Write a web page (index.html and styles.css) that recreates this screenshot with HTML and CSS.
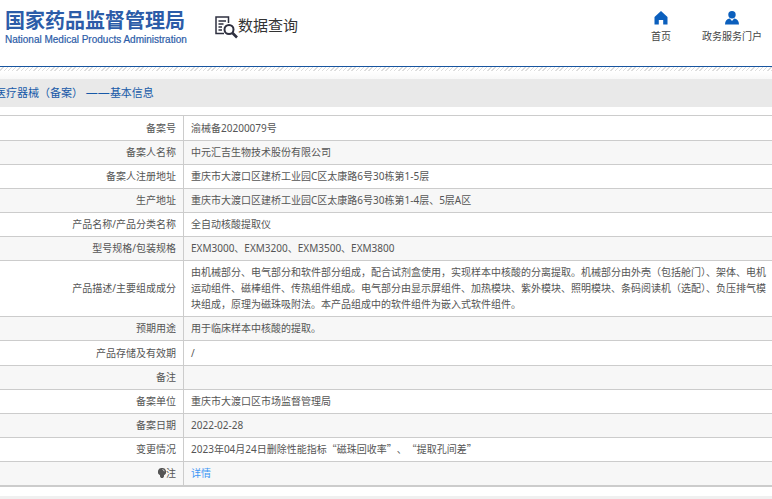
FILE: index.html
```html
<!DOCTYPE html>
<html lang="zh-CN">
<head>
<meta charset="utf-8">
<title>国家药品监督管理局 数据查询</title>
<link rel="stylesheet" href="styles.css">
</head>
<body>
<header class="header">
  <div class="brand">
    <div class="brand-cn">国家药品监督管理局</div>
    <div class="brand-en">National Medical Products Administration</div>
  </div>
  <div class="query">
    <svg class="query-icon" width="23" height="23" viewBox="0 0 23 23" fill="none" stroke="#2f3040">
      <path d="M13.500 7V1H1v16.500h8" stroke-width="1.500"/>
      <path d="M3.500 5h7.500M3.500 8h5M3.500 11h3.500M3.500 14h3.500" stroke-width="1.300"/>
      <circle cx="14" cy="13.500" r="4.500" stroke-width="2"/>
      <path d="M17.500 17l4.500 4.500" stroke-width="2.600"/>
    </svg>
    <span>数据查询</span>
  </div>
  <nav class="nav">
    <a href="#home">
      <svg width="14" height="14" viewBox="0 0 14 14" fill="#0b5fbd"><path d="M7 0l6.500 6v7.500H9.200V9H4.800v4.500H.5V6z"/></svg>
      <span>首页</span>
    </a>
    <a href="#portal">
      <svg width="14" height="14" viewBox="0 0 14 14" fill="#0b5fbd"><circle cx="7" cy="3.700" r="3.700"/><path d="M0 13.500C0 10 2 8 4.800 7.600L7 10l2.200-2.400C12 8 14 10 14 13.500z"/></svg>
      <span>政务服务门户</span>
    </a>
  </nav>
</header>
<div class="hatch"></div>
<main>
  <h1 class="title">医疗器械（备案） <span class="dash">——</span>基本信息</h1>
  <table class="info">
    <tbody>
      <tr><th scope="row">备案号</th><td>渝械备20200079号</td></tr>
      <tr><th scope="row">备案人名称</th><td>中元汇吉生物技术股份有限公司</td></tr>
      <tr><th scope="row">备案人注册地址</th><td>重庆市大渡口区建桥工业园C区太康路6号30栋第1-5层</td></tr>
      <tr><th scope="row">生产地址</th><td>重庆市大渡口区建桥工业园C区太康路6号30栋第1-4层、5层A区</td></tr>
      <tr><th scope="row">产品名称/产品分类名称</th><td>全自动核酸提取仪</td></tr>
      <tr><th scope="row">型号规格/包装规格</th><td>EXM3000、EXM3200、EXM3500、EXM3800</td></tr>
      <tr><th scope="row">产品描述/主要组成成分</th><td>由机械部分、电气部分和软件部分组成，配合试剂盒使用，实现样本中核酸的分离提取。机械部分由外壳（包括舱门）、架体、电机运动组件、磁棒组件、传热组件组成。电气部分由显示屏组件、加热模块、紫外模块、照明模块、条码阅读机（选配）、负压排气模块组成，原理为磁珠吸附法。本产品组成中的软件组件为嵌入式软件组件。</td></tr>
      <tr><th scope="row">预期用途</th><td>用于临床样本中核酸的提取。</td></tr>
      <tr><th scope="row">产品存储及有效期</th><td>/</td></tr>
      <tr><th scope="row">备注</th><td></td></tr>
      <tr><th scope="row">备案单位</th><td>重庆市大渡口区市场监督管理局</td></tr>
      <tr><th scope="row">备案日期</th><td>2022-02-28</td></tr>
      <tr><th scope="row">变更情况</th><td>2023年04月24日删除性能指标<span class="quoted">“磁珠回收率”、“提取孔间差”</span></td></tr>
      <tr><th scope="row"><svg class="bulb" width="8" height="10" viewBox="0 0 8 10"><path d="M4 0a3.800 3.800 0 0 1 2 7.200V8.500L5 10H3L2 8.500V7.200A3.800 3.800 0 0 1 4 0z" fill="#555"/><path d="M4.500 1.500q1.500.3 1.700 1.800" fill="none" stroke="#ddd"/></svg>注</th><td><a href="#detail">详情</a></td></tr>
    </tbody>
  </table>
</main>
<footer class="footer"></footer>
</body>
</html>
```
FILE: styles.css
```css
* { box-sizing: border-box; }

body {
  margin: 0;
  background: #fff;
  color: #555;
  font: 10px/16px "Noto Sans", "Noto Sans CJK SC", sans-serif;
  overflow-x: hidden;
}

a { text-decoration: none; }

.header {
  display: flex;
  align-items: flex-start;
  height: 67px;
  padding: 8px 10px 0 5px;
  border-bottom: 1px solid #17559f;
}

.brand {
  width: 210px;
  color: #2c5ca8;
  white-space: nowrap;
}

.brand-cn {
  font-size: 20px;
  line-height: 25px;
  font-weight: 700;
}

.brand-en {
  font: 10px/14px "Liberation Sans", sans-serif;
  -webkit-text-stroke: 0.2px #2c5ca8;
}

.query {
  display: flex;
  align-items: center;
  color: #333;
  font-size: 15px;
  line-height: 20px;
  padding-top: 8px;
}

.query span { margin-top: -6px; }

.nav {
  display: flex;
  gap: 31px;
  margin-left: auto;
  padding-top: 3px;
}

.nav a {
  display: flex;
  flex-direction: column;
  align-items: center;
  gap: 3px;
  color: #444;
}

.hatch {
  height: 12px;
  background:
    linear-gradient(transparent 4px, #fff 4px, #f8f8f8),
    repeating-linear-gradient(135deg, #fff 0 2px, #ddd 2px 3px);
}

.title {
  margin: 0 0 8px;
  height: 28px;
  background: #e9e9e9;
  color: #1759a8;
  font-size: 11px;
  line-height: 28px;
  font-weight: 400;
  text-indent: -5px;
  white-space: nowrap;
}

.dash { font-size: 12px; }

.info {
  width: 100%;
  border-spacing: 0;
  border-top: 1px solid #ccc;
  border-bottom: 1px solid #ccc;
}

.info th,
.info td {
  height: 24px;
  padding: 3px 0 4px 7px;
  border-bottom: 1px solid #ccc;
  font-weight: 400;
  text-align: left;
}

.info th {
  width: 184px;
  padding-right: 7px;
  border-right: 1px solid #ccc;
  text-align: right;
}

.info tr:first-child > * { height: 25px; }
.info tr:nth-child(9) > * { height: 25px; }
.info tr:nth-child(even) { background: #f7f7f7; }
.info td a { color: #3c96f5; }

.quoted {
  font-family: "Noto Sans CJK SC", sans-serif;
  text-spacing-trim: space-all;
}

.bulb { vertical-align: -1px; }

.footer {
  height: 16px;
  margin-top: 9px;
  background: #f0f0f0;
}
```
